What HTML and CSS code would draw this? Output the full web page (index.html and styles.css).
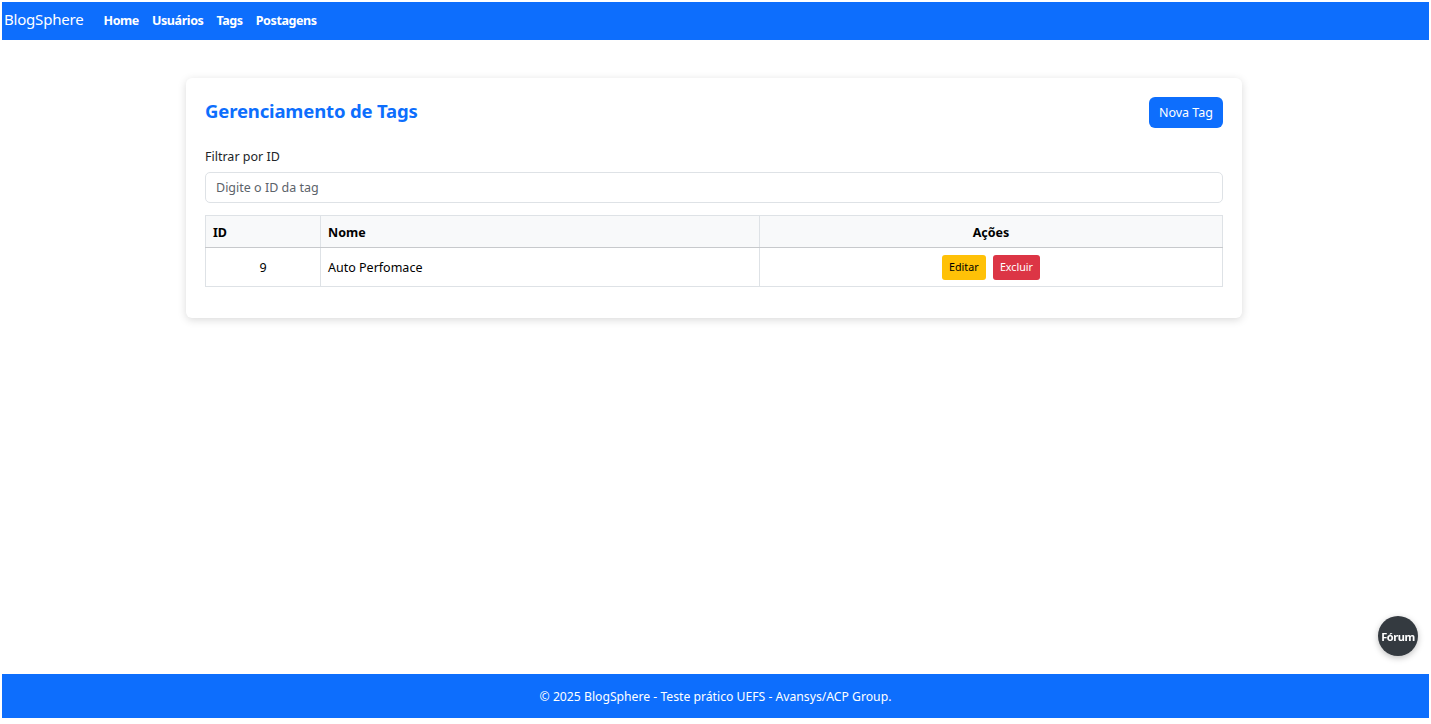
FILE: index.html
```html
<!DOCTYPE html>
<html lang="pt-BR">
<head>
<meta charset="utf-8">
<title>BlogSphere - Tags</title>
<link rel="stylesheet" href="styles.css">
</head>
<body>
<div class="app">
  <nav class="navbar">
    <span class="brand">BlogSphere</span>
    <ul class="nav-links">
      <li><a href="#">Home</a></li>
      <li><a href="#">Usuários</a></li>
      <li><a href="#">Tags</a></li>
      <li><a href="#">Postagens</a></li>
    </ul>
  </nav>
  <main class="main">
    <section class="card">
      <div class="card-head">
        <h2 class="title">Gerenciamento de Tags</h2>
        <button class="btn btn-primary">Nova Tag</button>
      </div>
      <label class="label" for="filtro">Filtrar por ID</label>
      <input id="filtro" class="input" type="text" placeholder="Digite o ID da tag">
      <table class="table">
        <thead>
          <tr>
            <th class="col-id">ID</th>
            <th class="col-nome">Nome</th>
            <th class="col-acoes">Ações</th>
          </tr>
        </thead>
        <tbody>
          <tr>
            <td class="cell-id">9</td>
            <td class="cell-nome">Auto Perfomace</td>
            <td class="cell-acoes">
              <button class="btn-sm btn-warning">Editar</button>
              <button class="btn-sm btn-danger">Excluir</button>
            </td>
          </tr>
        </tbody>
      </table>
    </section>
  </main>
  <footer class="footer">© 2025 BlogSphere - Teste prático UEFS - Avansys/ACP Group.</footer>
</div>
<button class="forum">Fórum</button>
</body>
</html>
```
FILE: styles.css
```css
* { box-sizing: border-box; }
html, body { height: 100%; }
body {
  margin: 2px;
  font-family: "Noto Sans", "Open Sans", "Liberation Sans", sans-serif;
  color: #212529;
  background: #fff;
}
.app {
  min-height: calc(100vh - 8px);
  display: flex;
  flex-direction: column;
}
.navbar {
  height: 38px;
  background: #0d6efd;
  display: flex;
  align-items: center;
  padding: 0 0 4px 2px;
}
.brand {
  color: #fff;
  font-size: 15px;
  margin-right: 20px;
  letter-spacing: -0.2px;
}
.nav-links {
  list-style: none;
  margin: 0;
  padding: 0;
  display: flex;
  gap: 13px;
}
.nav-links a {
  color: #fff;
  font-weight: 700;
  font-size: 12.5px;
  text-decoration: none;
  letter-spacing: -0.4px;
}
.main {
  flex: 1;
  padding-top: 38px;
  display: flex;
  justify-content: center;
  align-items: flex-start;
}
.card {
  width: 1056px;
  margin-right: 3px;
  background: #fff;
  border-radius: 6px;
  box-shadow: 0 2px 8px rgba(0,0,0,0.15);
  padding: 19px 19px 31px;
}
.card-head {
  display: flex;
  justify-content: space-between;
  align-items: flex-start;
}
.title {
  margin: 0;
  padding-top: 1px;
  color: #0d6efd;
  font-size: 18.5px;
  font-weight: 700;
  letter-spacing: -0.15px;
}
.btn {
  border: none;
  border-radius: 6px;
  font-family: inherit;
  font-size: 12.5px;
  height: 31px;
  padding: 0 10px;
  cursor: pointer;
}
.btn-primary { background: #0d6efd; color: #fff; }
.label {
  display: block;
  margin-top: 20px;
  font-size: 12.5px;
  color: #212529;
}
.input {
  display: block;
  width: 100%;
  height: 31px;
  margin-top: 7px;
  border: 1px solid #dee2e6;
  border-radius: 5px;
  padding: 0 10px;
  font-family: inherit;
  font-size: 12.5px;
  color: #212529;
}
.input::placeholder { color: #5c636a; }
.table {
  width: 100%;
  margin-top: 12px;
  border-collapse: collapse;
  font-size: 12.5px;
}
.table th, .table td {
  border: 1px solid #dee2e6;
  padding: 0 7px;
}
.table th {
  background: #f8f9fa;
  height: 32px;
  padding-top: 2px;
  text-align: left;
  font-weight: 700;
  border-bottom: 1px solid #c7c9cc;
  color: #000;
}
.table td { height: 39px; color: #000; }
.cell-id, .cell-nome { padding-bottom: 3px; }
.col-id { width: 115px; }
.col-nome { width: 439px; }
.table th.col-acoes { text-align: center; }
.cell-id { text-align: center; }
.cell-acoes { text-align: center; }
.btn-sm {
  border: none;
  border-radius: 3px;
  font-family: inherit;
  font-size: 10.7px;
  height: 25px;
  padding: 0 7px;
  margin: 0 2px;
  cursor: pointer;
}
.btn-warning { background: #ffc107; color: #000; }
.btn-danger { background: #dc3545; color: #fff; }
.footer {
  height: 44px;
  background: #0d6efd;
  color: #fff;
  font-size: 12.2px;
  display: flex;
  align-items: center;
  justify-content: center;
}
.forum {
  position: fixed;
  right: 13px;
  bottom: 68px;
  width: 40px;
  height: 40px;
  border-radius: 50%;
  border: none;
  background: #343a40;
  color: #fff;
  font-family: inherit;
  font-size: 11px;
  font-weight: 700;
  padding: 0;
  letter-spacing: -0.4px;
  box-shadow: 0 2px 6px rgba(0,0,0,0.25);
}
```
